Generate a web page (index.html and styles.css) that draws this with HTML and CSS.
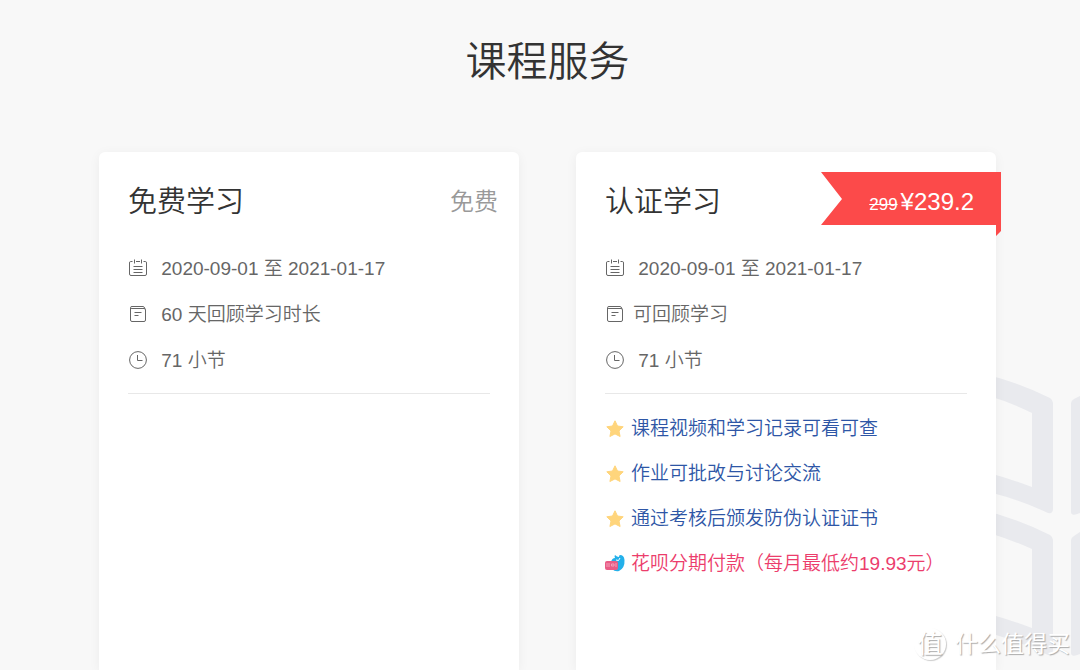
FILE: index.html
```html
<!DOCTYPE html>
<html lang="zh-CN">
<head>
<meta charset="utf-8">
<title>课程服务</title>
<link rel="stylesheet" href="styles.css">
</head>
<body>
<svg class="symbols" aria-hidden="true">
  <symbol id="calendar" viewBox="0 0 20 20"><path d="M4.500 3.500H2.500Q1.500 3.500 1.500 5V16Q1.500 17.500 3 17.500H17Q18.500 17.500 18.500 16V5Q18.500 3.500 17.500 3.500H15.500M8 3.500H12M6.500 1.500V5.500M13.500 1.500V5.500M5.500 8.500H14.500M5.500 11.500H14.500M5.500 14.500H14.500"/></symbol>
  <symbol id="note" viewBox="0 0 20 20"><path d="M2.500 4V16Q2.500 17.500 4 17.500H16Q17.500 17.500 17.500 16V6Q17.500 4.500 16 4.500H4Q2.500 4.500 2.500 3.500Q2.500 2.500 4 2.500H15Q16.500 2.500 17 5M6.500 8.500H13.500M6.500 11.500H10.500"/></symbol>
  <symbol id="clock" viewBox="0 0 20 20"><circle cx="10" cy="10" r="8.400"/><path d="M9.500 5V10.500H14.500"/></symbol>
  <symbol id="star" viewBox="0 0 20 20"><path fill="#ffd57c" stroke="#ffd57c" stroke-linejoin="round" d="M10 1.800L12.500 7L18.200 7.800L14 11.900L15.100 17.500L10 14.900L4.900 17.500L6 11.900L1.800 7.800L7.500 7Z"/></symbol>
</svg>
<main class="page">
  <svg class="backdrop" viewBox="0 0 120 310" aria-hidden="true">
    <path d="M0 9Q48 17 90 38Q93 40 93 43V149Q93 154 88 153Q60 140 36 134L0 125V106Q38 114 72 127V53Q38 36 0 29Z"/>
    <path d="M0 145Q48 154 90 175Q93 177 93 180V291Q93 296 88 295Q60 282 36 275L0 266V247Q38 255 72 268V189Q38 174 0 165Z"/>
    <path d="M120 36L114 39Q111 41 111 43V152Q111 157 120 153Z"/>
    <path d="M120 172L114 176Q111 178 111 180V293Q111 298 120 294Z"/>
  </svg>
  <h1 class="heading">课程服务</h1>
  <div class="cards">
    <section class="card">
      <header class="card-head">
        <h2 class="card-title">免费学习</h2>
        <span class="free">免费</span>
      </header>
      <ul class="facts">
        <li class="fact"><svg class="icon"><use href="#calendar"/></svg><span class="label">&nbsp;2020-09-01 至 2021-01-17</span></li>
        <li class="fact"><svg class="icon"><use href="#note"/></svg><span class="label">&nbsp;60 天回顾学习时长</span></li>
        <li class="fact"><svg class="icon"><use href="#clock"/></svg><span class="label">&nbsp;71 小节</span></li>
      </ul>
    </section>
    <section class="card">
      <header class="card-head">
        <h2 class="card-title">认证学习</h2>
        <div class="ribbon">
          <svg class="ribbon-shape" viewBox="0 0 180 64" aria-hidden="true"><path d="M0 0H180V59L175 64V53H0L21 27Z"/></svg>
          <p class="price"><del class="old-price">299</del>¥239.2</p>
        </div>
      </header>
      <ul class="facts">
        <li class="fact"><svg class="icon"><use href="#calendar"/></svg><span class="label">&nbsp;2020-09-01 至 2021-01-17</span></li>
        <li class="fact"><svg class="icon"><use href="#note"/></svg><span class="label">可回顾学习</span></li>
        <li class="fact"><svg class="icon"><use href="#clock"/></svg><span class="label">&nbsp;71 小节</span></li>
      </ul>
      <ul class="perks">
        <li class="perk"><svg class="icon"><use href="#star"/></svg><span class="label">课程视频和学习记录可看可查</span></li>
        <li class="perk"><svg class="icon"><use href="#star"/></svg><span class="label">作业可批改与讨论交流</span></li>
        <li class="perk"><svg class="icon"><use href="#star"/></svg><span class="label">通过考核后颁发防伪认证证书</span></li>
        <li class="perk installment">
          <svg class="icon" viewBox="0 0 20 20">
            <path fill="#23b0ea" stroke="none" d="M6 8Q7 4 10 4Q9 2 10 1Q12 3 14 3Q14 1 15 1Q19 1 19.500 6Q20 14 14 17Q10 18 7 15Z"/>
            <path fill="none" stroke="#fff" d="M11 6Q14 8 15 4"/>
            <rect x="0" y="7" width="13" height="9" rx="2" fill="#e95c86" stroke="none"/>
            <path fill="none" stroke="#f3a0b9" d="M2 9V13M4 9V13M6.500 10H9V12H6.500ZM11 9V13"/>
          </svg>
          <span class="label">花呗分期付款（每月最低约19.93元）</span>
        </li>
      </ul>
    </section>
  </div>
  <div class="watermark">
    <span class="seal">值</span>
    <span>什么值得买</span>
  </div>
</main>
</body>
</html>
```
FILE: styles.css
```css
* {
  box-sizing: border-box;
}

body {
  margin: 0;
  background: #f8f8f8;
  color: #666;
  font-family: "Liberation Sans", "Noto Sans CJK SC", sans-serif;
  font-size: 19px;
  font-weight: 350;
}

h1, h2, p, ul {
  margin: 0;
  padding: 0;
  font-weight: 350;
  list-style: none;
}

.symbols {
  position: absolute;
  width: 0;
  height: 0;
}

.page {
  position: relative;
  display: flex;
  flex-direction: column;
  min-height: 100vh;
  padding: 32px 84px 0 99px;
}

.backdrop {
  position: absolute;
  right: 0;
  bottom: 0;
  width: 120px;
  fill: #e9eaee;
}

.heading {
  margin-bottom: 60px;
  color: #333;
  font-size: 41px;
  line-height: 60px;
  text-align: center;
}

.cards {
  position: relative;
  display: grid;
  flex: 1;
  grid-template-columns: 1fr 1fr;
  gap: 57px;
}

.card {
  padding: 19px 29px 32px;
  border-radius: 6px 6px 0 0;
  background: #fff;
  box-shadow: 0 2px 12px rgba(0, 0, 0, 0.05);
}

.card-head {
  position: relative;
  display: flex;
  align-items: center;
  justify-content: space-between;
  height: 60px;
  margin-right: -8px;
}

.card-title,
.free {
  padding-bottom: 4px;
}

.card-title {
  color: #333;
  font-size: 29px;
}

.free {
  color: #999;
  font-size: 24px;
}

.ribbon {
  position: absolute;
  top: 1px;
  right: -26px;
  width: 180px;
  color: #fff;
}

.ribbon-shape {
  position: absolute;
  width: 100%;
  fill: #fc4a4a;
}

.price {
  position: relative;
  padding-right: 27px;
  font-size: 24px;
  line-height: 60px;
  text-align: right;
}

.old-price {
  margin-right: 3px;
  font-size: 17px;
}

.facts {
  padding: 14px 0 10px;
  border-bottom: 1px solid #e8e8e8;
}

.fact {
  display: flex;
  align-items: center;
  gap: 8px;
  height: 46px;
}

.label {
  padding-bottom: 4px;
}

.icon {
  flex: none;
  width: 20px;
  height: 20px;
  fill: none;
  stroke: #666;
}

.perks {
  padding-top: 12px;
  color: #2e56a6;
}

.perk {
  display: flex;
  align-items: center;
  gap: 6px;
  height: 45px;
  white-space: nowrap;
}

.installment {
  color: #ec3d6c;
}

.watermark {
  position: absolute;
  right: 10px;
  bottom: 8px;
  display: flex;
  align-items: center;
  gap: 9px;
  color: #fff;
  font-size: 23px;
  font-weight: 400;
  line-height: 36px;
  text-shadow: 1px 1px 1px #aaa;
}

.seal {
  width: 32px;
  height: 32px;
  border-radius: 50%;
  box-shadow: 1px 1px 1px #ccc;
  font-size: 25px;
  line-height: 32px;
  text-align: center;
}
```
